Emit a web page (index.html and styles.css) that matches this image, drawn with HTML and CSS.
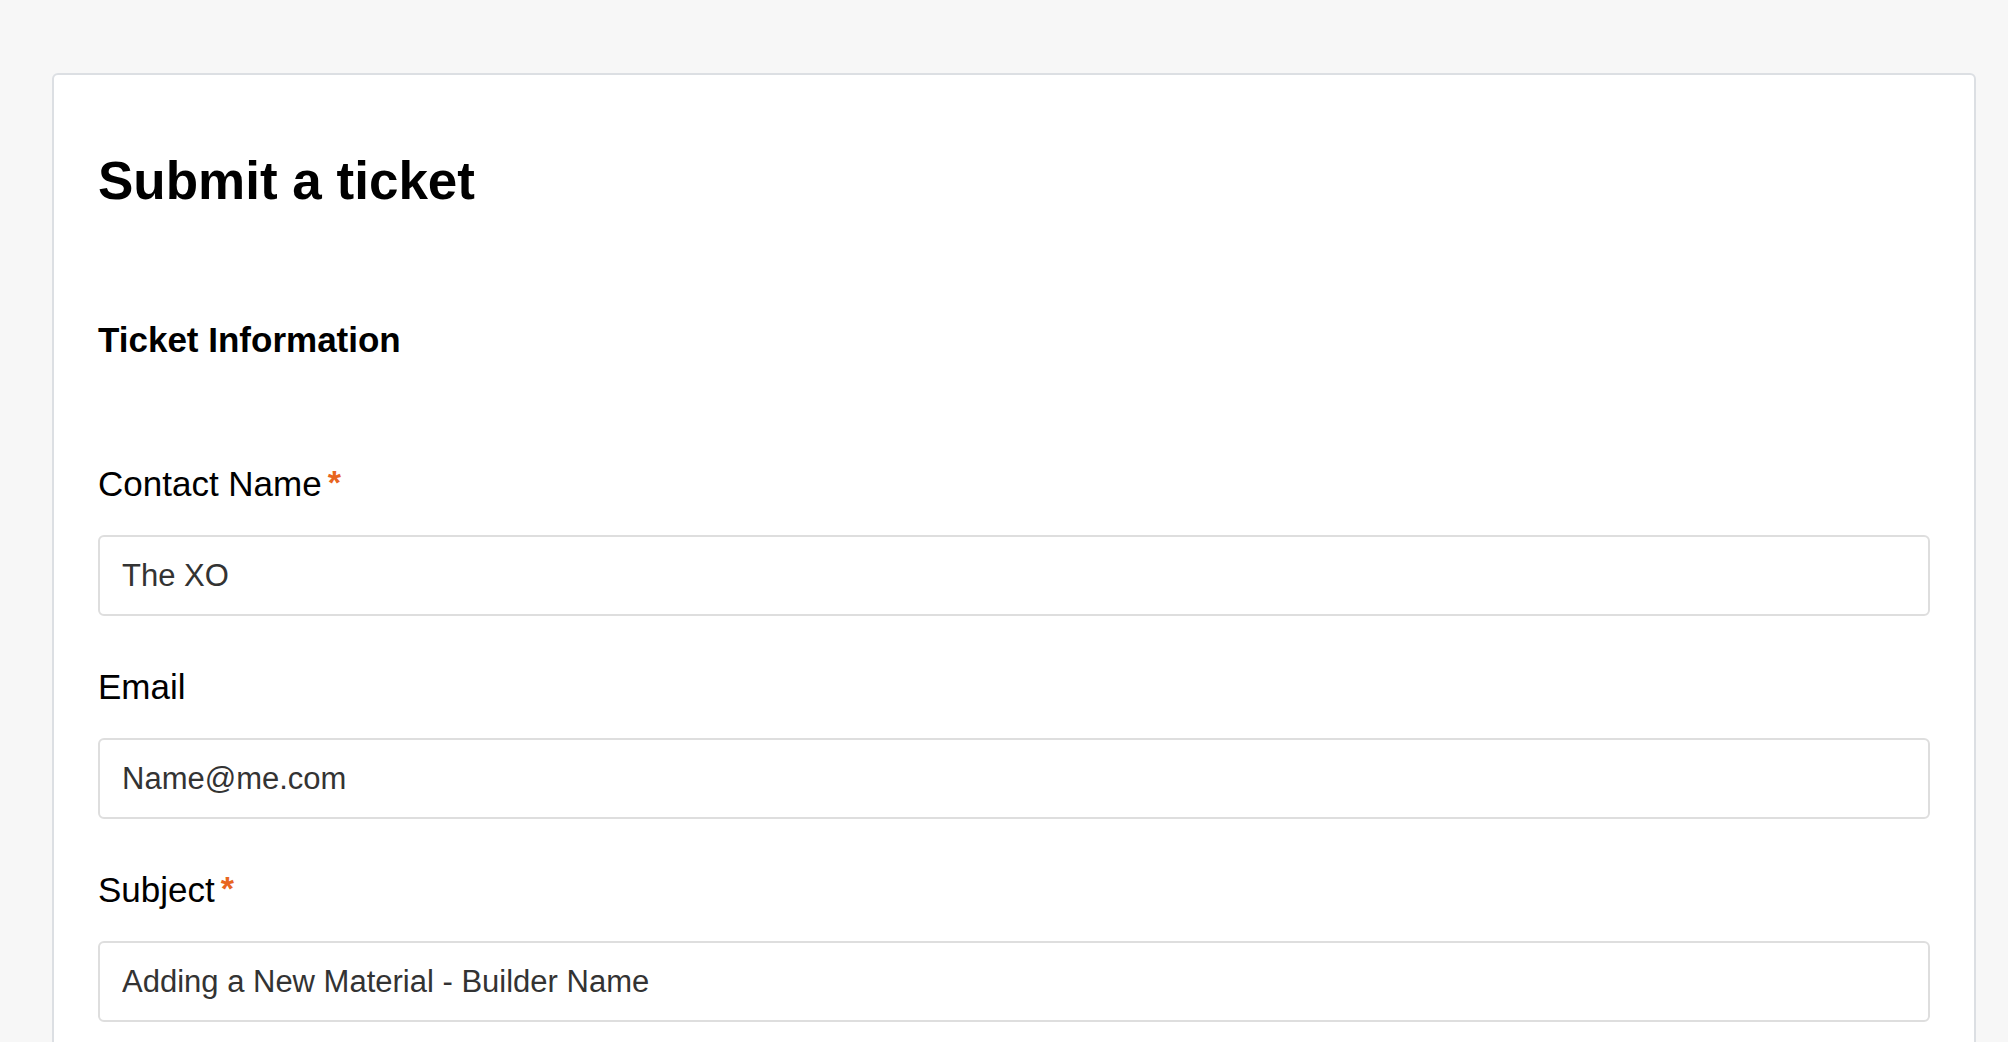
FILE: index.html
```html
<!DOCTYPE html>
<html>
<head>
  <meta charset="UTF-8">
  <title>Submit a ticket</title>
  <link rel="stylesheet" href="styles.css">
</head>
<body>
  <div class="card">
    <h1>Submit a ticket</h1>
    <h2>Ticket Information</h2>
    <form class="ticket-form">
      <div class="field">
        <label for="contactName">Contact Name<span class="required">*</span></label>
        <input type="text" id="contactName" value="The XO">
      </div>
      <div class="field">
        <label for="email">Email</label>
        <input type="email" id="email" value="Name@me.com">
      </div>
      <div class="field">
        <label for="subject">Subject<span class="required">*</span></label>
        <input type="text" id="subject" value="Adding a New Material - Builder Name">
      </div>
    </form>
  </div>
</body>
</html>
```

FILE: styles.css
```css
html, body {
  height: 100%;
}
body {
  margin: 0;
  padding: 73px 32px 0 52px;
  box-sizing: border-box;
  overflow: hidden;
  font-family: "Liberation Sans", Arial, sans-serif;
  background-color: #f7f7f7;
  color: #000;
}
.card {
  background-color: white;
  border: 2px solid #dcdfe3;
  border-radius: 6px;
  padding: 75px 44px 44px 44px;
}
h1 {
  margin: 0;
  font-size: 53px;
  line-height: 62px;
  font-weight: bold;
}
h2 {
  margin: 107px 0 0 0;
  font-size: 35px;
  line-height: 42px;
  font-weight: bold;
}
.ticket-form {
  margin-top: 102px;
}
.field {
  margin-bottom: 50px;
}
label {
  display: block;
  font-size: 35px;
  line-height: 42px;
  margin-bottom: 30px;
}
.required {
  color: #e8661f;
  font-size: 34px;
  font-weight: bold;
  margin-left: 6px;
  vertical-align: top;
  line-height: 38px;
}
input {
  display: block;
  width: 100%;
  height: 81px;
  box-sizing: border-box;
  margin: 0;
  padding: 0 22px;
  border: 2px solid #dedede;
  border-radius: 6px;
  font-family: "Liberation Sans", Arial, sans-serif;
  font-size: 31px;
  color: #333;
  background-color: #fff;
  outline: none;
}
```
